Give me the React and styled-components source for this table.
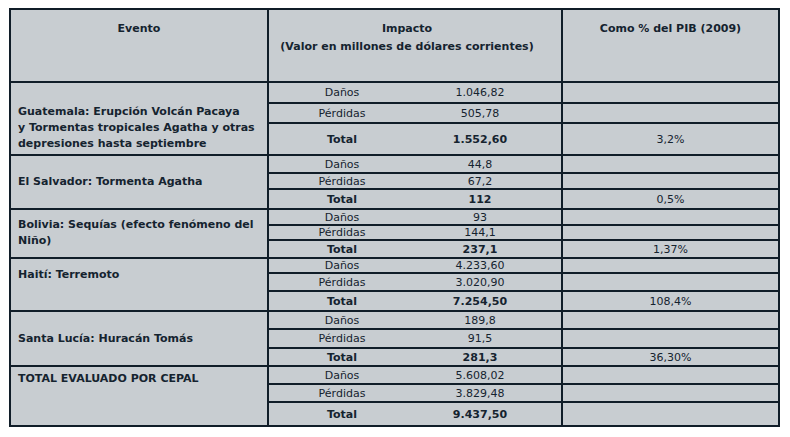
import styled, { createGlobalStyle } from 'styled-components';

const GlobalStyle = createGlobalStyle`
  body {
    margin: 0;
    background: #ffffff;
    font-family: 'DejaVu Sans', 'Liberation Sans', sans-serif;
    color: #15232f;
  }
`;

// line breaks follow the source document
const events = [
  {
    name: 'Guatemala: Erupción Volcán Pacaya\ny Tormentas tropicales Agatha y otras\ndepresiones hasta septiembre',
    danos: '1.046,82',
    perdidas: '505,78',
    total: '1.552,60',
    pib: '3,2%',
    shift: 18,
  },
  { name: 'El Salvador: Tormenta Agatha', danos: '44,8', perdidas: '67,2', total: '112', pib: '0,5%', shift: 0 },
  { name: 'Bolivia: Sequías (efecto fenómeno del\nNiño)', danos: '93', perdidas: '144,1', total: '237,1', pib: '1,37%', shift: -2 },
  { name: 'Haití: Terremoto', danos: '4.233,60', perdidas: '3.020,90', total: '7.254,50', pib: '108,4%', shift: -20 },
  { name: 'Santa Lucía: Huracán Tomás', danos: '189,8', perdidas: '91,5', total: '281,3', pib: '36,30%', shift: 0 },
  { name: 'TOTAL EVALUADO POR CEPAL', danos: '5.608,02', perdidas: '3.829,48', total: '9.437,50', pib: '', top: true },
];

const App = () => {
  return (
    <>
      <GlobalStyle />
      <Table>
        <HeadCell>Evento</HeadCell>
        <HeadCell $padRight={16}>
          Impacto
          <br />
          (Valor en millones de dólares corrientes)
        </HeadCell>
        <HeadCell>Como % del PIB (2009)</HeadCell>

        {events.map((ev, idx) => (
          <Group key={idx} ev={ev} />
        ))}
      </Table>
    </>
  );
};

const Group = ({ ev }) => {
  const rows = [
    ['Daños', ev.danos, false, ''],
    ['Pérdidas', ev.perdidas, false, ''],
    ['Total', ev.total, true, ev.pib],
  ];
  return (
    <>
      <EventCell $shift={ev.shift || 0} $top={ev.top}>
        {ev.name}
      </EventCell>
      {rows.map(([label, value, bold, pib]) => (
        <ImpactRow key={label} label={label} value={value} bold={bold} pib={pib} />
      ))}
    </>
  );
};

const ImpactRow = ({ label, value, bold, pib }) => (
  <>
    <ImpactCell $bold={bold}>
      <Label>{label}</Label>
      <Value>{value}</Value>
    </ImpactCell>
    <PibCell>{pib}</PibCell>
  </>
);

const Table = styled.div`
  display: grid;
  grid-template-columns: 256px 292px 215px;
  grid-template-rows: 71px 19px 18px 30px 16px 14px 18px 14px 13px 16px 13px 16px 18px 16px 17px 16px 16px 16px 22px;
  gap: 2px;
  width: fit-content;
  margin: 8px 0 0 9px;
  border: 2px solid #101d28;
  background: #101d28;
  font-size: 11px;
`;

const Cell = styled.div`
  background: #c8cdd1;
  display: flex;
  align-items: center;
  line-height: 1;
  overflow: visible;
`;

const HeadCell = styled(Cell)`
  align-items: flex-start;
  justify-content: center;
  text-align: center;
  font-weight: bold;
  line-height: 18px;
  padding: 10px ${(p) => p.$padRight || 0}px 0 0;
`;

const EventCell = styled(Cell)`
  grid-row: span 3;
  align-items: ${(p) => (p.$top ? 'flex-start' : 'center')};
  padding: ${(p) => (p.$top ? '4px' : `${Math.max(p.$shift, 0)}px`)} 4px
    ${(p) => `${Math.max(-p.$shift, 0)}px`} 7px;
  font-weight: bold;
  line-height: 16px;
  white-space: pre-line;
`;

const ImpactCell = styled(Cell)`
  font-weight: ${(p) => (p.$bold ? 'bold' : 'normal')};
`;

const Label = styled.span`
  width: 146px;
  text-align: center;
`;

const Value = styled.span`
  flex: 1;
  text-align: center;
  padding-right: 16px;
`;

const PibCell = styled(Cell)`
  justify-content: center;
`;

export default App;
